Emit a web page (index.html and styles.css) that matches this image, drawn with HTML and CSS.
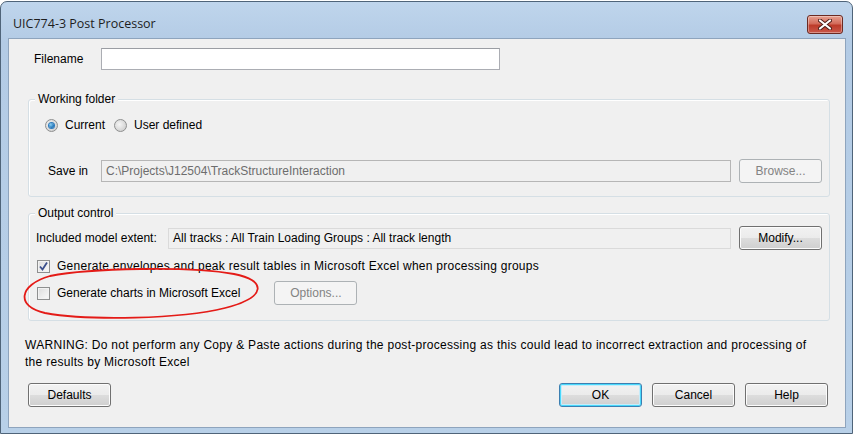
FILE: index.html
```html
<!DOCTYPE html>
<html>
<head>
    <meta charset="UTF-8">
    <title>UIC774-3 Post Processor</title>
    <link rel="stylesheet" href="styles.css">
</head>
<body>
<div class="window">
    <div class="titlebar">
        <span class="title">UIC774-3 Post Processor</span>
        <span class="close">
            <svg width="14" height="11" viewBox="0 0 14 11">
                <path d="M2 1.5 L12 9.5 M12 1.5 L2 9.5" stroke="#4a1c16" stroke-width="4" stroke-linecap="round"/>
                <path d="M2 1.5 L12 9.5 M12 1.5 L2 9.5" stroke="#ffffff" stroke-width="2.2" stroke-linecap="round"/>
            </svg>
        </span>
    </div>
    <div class="client">
        <div class="row filename-row">
            <label class="lbl-file">Filename</label>
            <input type="text" class="edit edit-file" value="">
        </div>

        <div class="group group-folder">
            <div class="legend">Working folder</div>
            <div class="radios">
                <span class="radio checked"></span><span class="opt">Current</span>
                <span class="radio"></span><span class="opt">User defined</span>
            </div>
            <div class="row save-row">
                <label class="lbl-save">Save in</label>
                <div class="edit disabled edit-save">C:\Projects\J12504\TrackStructureInteraction</div>
                <button class="btn btn-disabled">Browse...</button>
            </div>
        </div>

        <div class="group group-output">
            <div class="legend">Output control</div>
            <div class="row extent-row">
                <label class="lbl-extent">Included model extent:</label>
                <div class="edit readonly edit-extent">All tracks : All Train Loading Groups : All track length</div>
                <button class="btn">Modify...</button>
            </div>
            <div class="check-row">
                <span class="check">
                    <svg width="11" height="11" viewBox="0 0 11 11"><path d="M2 5.5 L4.5 8.5 L9 1.5" fill="none" stroke="#3b4f8c" stroke-width="1.8"/></svg>
                </span>
                <span class="check-text wide">Generate envelopes and peak result tables in Microsoft Excel when processing groups</span>
            </div>
            <div class="check-row charts-row">
                <span class="check"></span>
                <span class="check-text">Generate charts in Microsoft Excel</span>
                <button class="btn btn-disabled btn-options">Options...</button>
            </div>
            <svg class="mark" width="244" height="54" viewBox="0 0 244 54">
                <path d="M30 9 C70 1 170 -1 214 7 C246 13 248 30 205 41 C160 52 70 54 25 46 C-4 40 -2 18 30 9 Z" fill="none" stroke="#e41b17" stroke-width="1.8"/>
            </svg>
        </div>

        <p class="warning">WARNING: Do not perform any Copy &amp; Paste actions during the post-processing as this could lead to incorrect extraction and processing of the results by Microsoft Excel</p>

        <div class="buttons">
            <button class="btn">Defaults</button>
            <div class="spacer"></div>
            <button class="btn btn-default">OK</button>
            <button class="btn">Cancel</button>
            <button class="btn">Help</button>
        </div>
    </div>
</div>
</body>
</html>
```

FILE: styles.css
```css
body {
    margin: 0;
    background: #ffffff;
    font-family: "Liberation Sans", Arial, sans-serif;
    font-size: 12px;
    color: #000;
}

.window {
    width: 838px;
    height: 426px;
    margin-top: 1px;
    padding: 0 6px 5px 7px;
    border: 1px solid #4f6479;
    border-radius: 7px 7px 0 0;
    background: linear-gradient(to bottom, #bfd5ec, #b3cbe5 40px, #b8d0e8);
    display: flex;
    flex-direction: column;
}

.titlebar {
    height: 36px;
    display: flex;
    align-items: center;
    justify-content: space-between;
    padding: 0 3px 0 5px;
}

.title {
    font-family: "Open Sans", "Noto Sans", sans-serif;
    font-size: 12.5px;
    color: #1e1e1e;
    margin-top: 6px;
}

.close {
    width: 34px;
    height: 17px;
    margin-top: 9px;
    border: 1px solid #6b2a22;
    border-radius: 3px;
    background: linear-gradient(to bottom, #e7a191, #d26b5a 45%, #bd3b2a 55%, #c9584a);
    display: flex;
    align-items: center;
    justify-content: center;
    box-shadow: inset 0 0 0 1px rgba(255,255,255,0.35);
}

.client {
    flex: 1;
    background: #f0f0f0;
    border: 1px solid #8ea4bd;
    position: relative;
    padding: 0 0 0 19px;
}

.row {
    display: flex;
    align-items: center;
}

.filename-row {
    margin-top: 9px;
    padding-left: 6px;
    height: 22px;
}

.lbl-file {
    width: 67px;
}

.edit {
    box-sizing: border-box;
    height: 22px;
    border: 1px solid #abadb3;
    border-top-color: #9a9da3;
    background: #fff;
    font: inherit;
    padding: 0 4px;
    display: flex;
    align-items: center;
}

.edit-file {
    width: 399px;
    margin: 0;
    outline: none;
}

.edit.disabled {
    background: #f0f0f0;
    border-color: #b6b6b6;
    color: #6d6d6d;
}

.edit.readonly {
    background: #f0f0f0;
    border-color: #dadada;
}

.group {
    width: 800px;
    border: 1px solid #d5dfe5;
    border-radius: 3px;
    box-shadow: inset 1px 1px 0 #fff;
    position: relative;
}

.legend {
    background: #f0f0f0;
    width: fit-content;
    margin: -9px 0 0 6px;
    padding: 0 3px;
    line-height: 16px;
}

.group-folder {
    margin-top: 29px;
    height: 96px;
}

.radios {
    display: flex;
    align-items: center;
    margin: 11px 0 0 16px;
}

.radio {
    box-sizing: border-box;
    width: 13px;
    height: 13px;
    border-radius: 50%;
    border: 1px solid #8e8f8f;
    background: radial-gradient(circle at 40% 40%, #f5f5f5, #d4d4d4 70%, #c9c9c9);
    display: inline-flex;
    align-items: center;
    justify-content: center;
}

.radio.checked::after {
    content: "";
    width: 5px;
    height: 5px;
    border-radius: 50%;
    background: radial-gradient(circle at 35% 35%, #8ad0f5, #1a6fb5 70%, #0e4f8a);
    box-shadow: 0 0 0 1px #2e7bbd;
}

.opt {
    margin: 0 9px 0 7px;
}

.save-row {
    margin: 27px 0 0 19px;
}

.lbl-save {
    width: 53px;
}

.edit-save {
    width: 630px;
}

.btn {
    box-sizing: border-box;
    width: 83px;
    height: 24px;
    border: 1px solid #707070;
    border-radius: 3px;
    background: linear-gradient(to bottom, #f2f2f2, #ebebeb 50%, #dddddd 50%, #cfcfcf);
    box-shadow: inset 0 0 0 1px #fcfcfc;
    font: inherit;
    color: #000;
    padding: 0;
}

.save-row .btn,
.extent-row .btn {
    margin-left: 8px;
}

.btn-disabled {
    border-color: #adb2b5;
    background: #f4f4f4;
    color: #838383;
    box-shadow: none;
}

.btn-default {
    border-color: #3c7fb1;
    box-shadow: inset 0 0 0 1px #48d8fb, inset 0 0 0 2px #c6ecfa;
}

.group-output {
    margin-top: 16px;
    height: 106px;
}

.extent-row {
    margin: 5px 0 0 7px;
}

.lbl-extent {
    width: 132px;
}

.edit-extent {
    width: 563px;
    height: 21px;
}

.check-row {
    display: flex;
    align-items: center;
    margin: 8px 0 0 8px;
    height: 16px;
}

.check {
    box-sizing: border-box;
    width: 13px;
    height: 13px;
    border: 1px solid #8e8f8f;
    background: linear-gradient(135deg, #dcdcdc, #f4f4f4 80%);
    box-shadow: inset 0 0 0 1px #f2f2f2;
    display: inline-flex;
    align-items: center;
    justify-content: center;
}

.check-text {
    margin-left: 7px;
}

.check-text.wide {
    letter-spacing: 0.27px;
}

.charts-row {
    margin-top: 11px;
}

.btn-options {
    margin-left: 34px;
}

.mark {
    position: absolute;
    left: -9px;
    top: 53px;
}

.warning {
    margin: 16px 20px 0 -3px;
    line-height: 17px;
    letter-spacing: 0.29px;
}

.buttons {
    display: flex;
    margin: 12px 17px 0 0;
    gap: 10px;
}

.spacer {
    flex: 1;
}
```
